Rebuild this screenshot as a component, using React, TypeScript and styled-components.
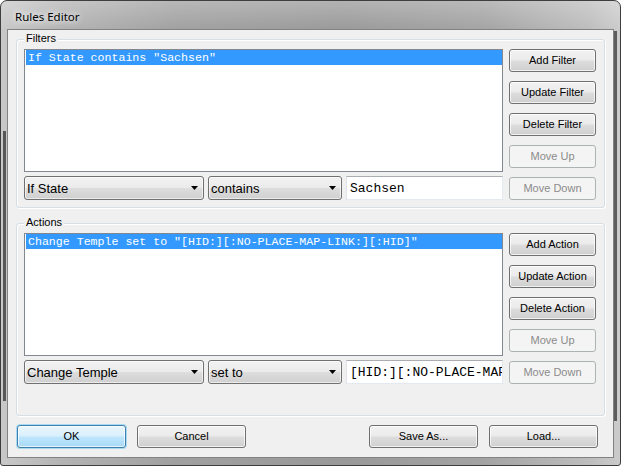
import React from "react";
import styled, { createGlobalStyle, css } from "styled-components";

const GlobalStyle = createGlobalStyle`
  html, body { margin: 0; padding: 0; background: #ffffff; }
  * { box-sizing: border-box; }
`;

const Window = styled.div`
  width: 621px;
  height: 466px;
  display: flex;
  flex-direction: column;
  border: 1px solid #3e3e3e;
  border-radius: 7px 7px 3px 3px;
  padding: 0 7px 8px 7px;
  background:
    linear-gradient(#575757, #575757) 2px 130px / 3px 270px no-repeat,
    linear-gradient(#5c5c5c, #5c5c5c) 613px 30px / 3px 390px no-repeat,
    linear-gradient(180deg, rgba(255,255,255,0.25) 0, rgba(255,255,255,0) 30px),
    linear-gradient(90deg, #c8c8c8 0%, #b3b3b3 10%, #a0a0a0 28%, #999999 55%, #a3a3a3 78%, #bdbdbd 95%, #cbcbcb 100%);
  font-family: "Liberation Sans", Arial, sans-serif;
`;

const TitleBar = styled.div`
  height: 29px;
  display: flex;
  align-items: center;
  padding-left: 7px;
  padding-top: 1px;
`;

const Title = styled.span`
  font-family: "Noto Sans", "Liberation Sans", sans-serif;
  font-size: 11.5px;
  color: #000;
  text-shadow: 0 0 6px rgba(255,255,255,0.95), 0 0 10px rgba(255,255,255,0.8);
`;

const Client = styled.div`
  flex: 1;
  display: flex;
  flex-direction: column;
  background: #f0f0f0;
  box-shadow: 0 0 0 1px #828282;
  padding: 9px 8px 9px 8px;
`;

const Group = styled.div<{ $padBottom: number; $gapAfter: number }>`
  position: relative;
  border: 1px solid #d5dfe5;
  border-radius: 3px;
  box-shadow: inset 1px 1px 0 #ffffff, 1px 1px 0 #ffffff;
  padding: 9px 8px ${(p) => p.$padBottom}px 7px;
  margin-bottom: ${(p) => p.$gapAfter}px;
  display: grid;
  grid-template-columns: 479px 87px;
  column-gap: 6px;
`;

const GroupLabel = styled.span`
  position: absolute;
  top: -8px;
  left: 7px;
  padding: 0 2px;
  background: #f0f0f0;
  font-size: 11px;
  line-height: 13px;
  color: #000;
`;

const LeftCol = styled.div`
  display: flex;
  flex-direction: column;
  gap: 4px;
`;

const ButtonCol = styled.div`
  display: flex;
  flex-direction: column;
  gap: 9px;
`;

const ListBox = styled.div`
  height: 123px;
  background: #ffffff;
  border: 1px solid #828790;
  padding: 0 0 0 1px;
  overflow: hidden;
`;

const ListRow = styled.div`
  height: 15px;
  background: #3399ff;
  color: #ffffff;
  font-family: "Liberation Mono", "Courier New", monospace;
  font-size: 11.6px;
  line-height: 15px;
  padding-left: 2px;
  white-space: nowrap;
  overflow: hidden;
`;

const ComboRow = styled.div`
  height: 24px;
  display: flex;
  gap: 4px;
`;

const Combo = styled.div<{ $w: number }>`
  width: ${(p) => p.$w}px;
  height: 24px;
  display: flex;
  align-items: center;
  justify-content: space-between;
  border: 1px solid #707070;
  border-radius: 3px;
  background: linear-gradient(180deg, #f2f2f2 0%, #ebebeb 48%, #dddddd 52%, #cfcfcf 100%);
  box-shadow: inset 0 0 0 1px rgba(255,255,255,0.6);
  padding: 0 5px 0 2px;
  font-size: 13px;
  color: #000;
`;

const TextField = styled.div`
  flex: 1;
  height: 24px;
  display: flex;
  align-items: center;
  background: #ffffff;
  border: 1px solid;
  border-color: #abadb3 #e3e9ef #e3e9ef #e2e3ea;
  padding-left: 3px;
  font-family: "Liberation Mono", "Courier New", monospace;
  font-size: 13px;
  color: #000;
  white-space: nowrap;
  overflow: hidden;
`;

const Button = styled.button<{ $w?: number; $variant?: "normal" | "disabled" | "default" }>`
  width: ${(p) => (p.$w ? `${p.$w}px` : "100%")};
  height: 23px;
  margin: 0;
  padding: 0;
  border-radius: 3px;
  font-family: "Liberation Sans", Arial, sans-serif;
  font-size: 11px;
  line-height: 21px;
  text-align: center;
  cursor: default;
  ${(p) =>
    p.$variant === "disabled"
      ? css`
          border: 1px solid #adb2b5;
          background: #f4f4f4;
          color: #8b8b8b;
        `
      : p.$variant === "default"
      ? css`
          border: 1px solid #3c7fb1;
          background: linear-gradient(180deg, #eaf6fd 0%, #d9f0fc 48%, #bee6fd 52%, #a7d9f5 100%);
          box-shadow: inset 0 0 0 1px rgba(255,255,255,0.7), 0 0 0 1px rgba(80,190,240,0.45);
          color: #000;
        `
      : css`
          border: 1px solid #707070;
          background: linear-gradient(180deg, #f2f2f2 0%, #ebebeb 48%, #dddddd 52%, #cfcfcf 100%);
          box-shadow: inset 0 0 0 1px rgba(255,255,255,0.7);
          color: #000;
        `}
`;

const Footer = styled.div`
  height: 23px;
  display: flex;
  justify-content: space-between;
  padding: 0 7px 0 1px;
`;

const ButtonPair = styled.div`
  display: flex;
  gap: 11px;
`;

const Arrow = () => (
  <svg width="7" height="4" viewBox="0 0 7 4">
    <path d="M0 0H7L3.5 4Z" fill="#000" />
  </svg>
);

type Section = {
  label: string;
  item: string;
  combo1: string;
  combo2: string;
  value: string;
  noun: string;
  padBottom: number;
  gapAfter: number;
};

const sections: Section[] = [
  {
    label: "Filters",
    item: 'If State contains "Sachsen"',
    combo1: "If State",
    combo2: "contains",
    value: "Sachsen",
    noun: "Filter",
    padBottom: 7,
    gapAfter: 15,
  },
  {
    label: "Actions",
    item: 'Change Temple set to "[HID:][:NO-PLACE-MAP-LINK:][:HID]"',
    combo1: "Change Temple",
    combo2: "set to",
    value: "[HID:][:NO-PLACE-MAP-LINK:][:HID]",
    noun: "Action",
    padBottom: 31,
    gapAfter: 9,
  },
];

export default function App() {
  return (
    <>
      <GlobalStyle />
      <Window>
        <TitleBar>
          <Title>Rules Editor</Title>
        </TitleBar>
        <Client>
          {sections.map((s) => (
            <Group key={s.label} $padBottom={s.padBottom} $gapAfter={s.gapAfter}>
              <GroupLabel>{s.label}</GroupLabel>
              <LeftCol>
                <ListBox>
                  <ListRow>{s.item}</ListRow>
                </ListBox>
                <ComboRow>
                  <Combo $w={180}>
                    <span>{s.combo1}</span>
                    <Arrow />
                  </Combo>
                  <Combo $w={134}>
                    <span>{s.combo2}</span>
                    <Arrow />
                  </Combo>
                  <TextField>{s.value}</TextField>
                </ComboRow>
              </LeftCol>
              <ButtonCol>
                <Button>Add {s.noun}</Button>
                <Button>Update {s.noun}</Button>
                <Button>Delete {s.noun}</Button>
                <Button $variant="disabled">Move Up</Button>
                <Button $variant="disabled">Move Down</Button>
              </ButtonCol>
            </Group>
          ))}
          <Footer>
            <ButtonPair>
              <Button $w={109} $variant="default">OK</Button>
              <Button $w={109}>Cancel</Button>
            </ButtonPair>
            <ButtonPair>
              <Button $w={109}>Save As...</Button>
              <Button $w={109}>Load...</Button>
            </ButtonPair>
          </Footer>
        </Client>
      </Window>
    </>
  );
}
